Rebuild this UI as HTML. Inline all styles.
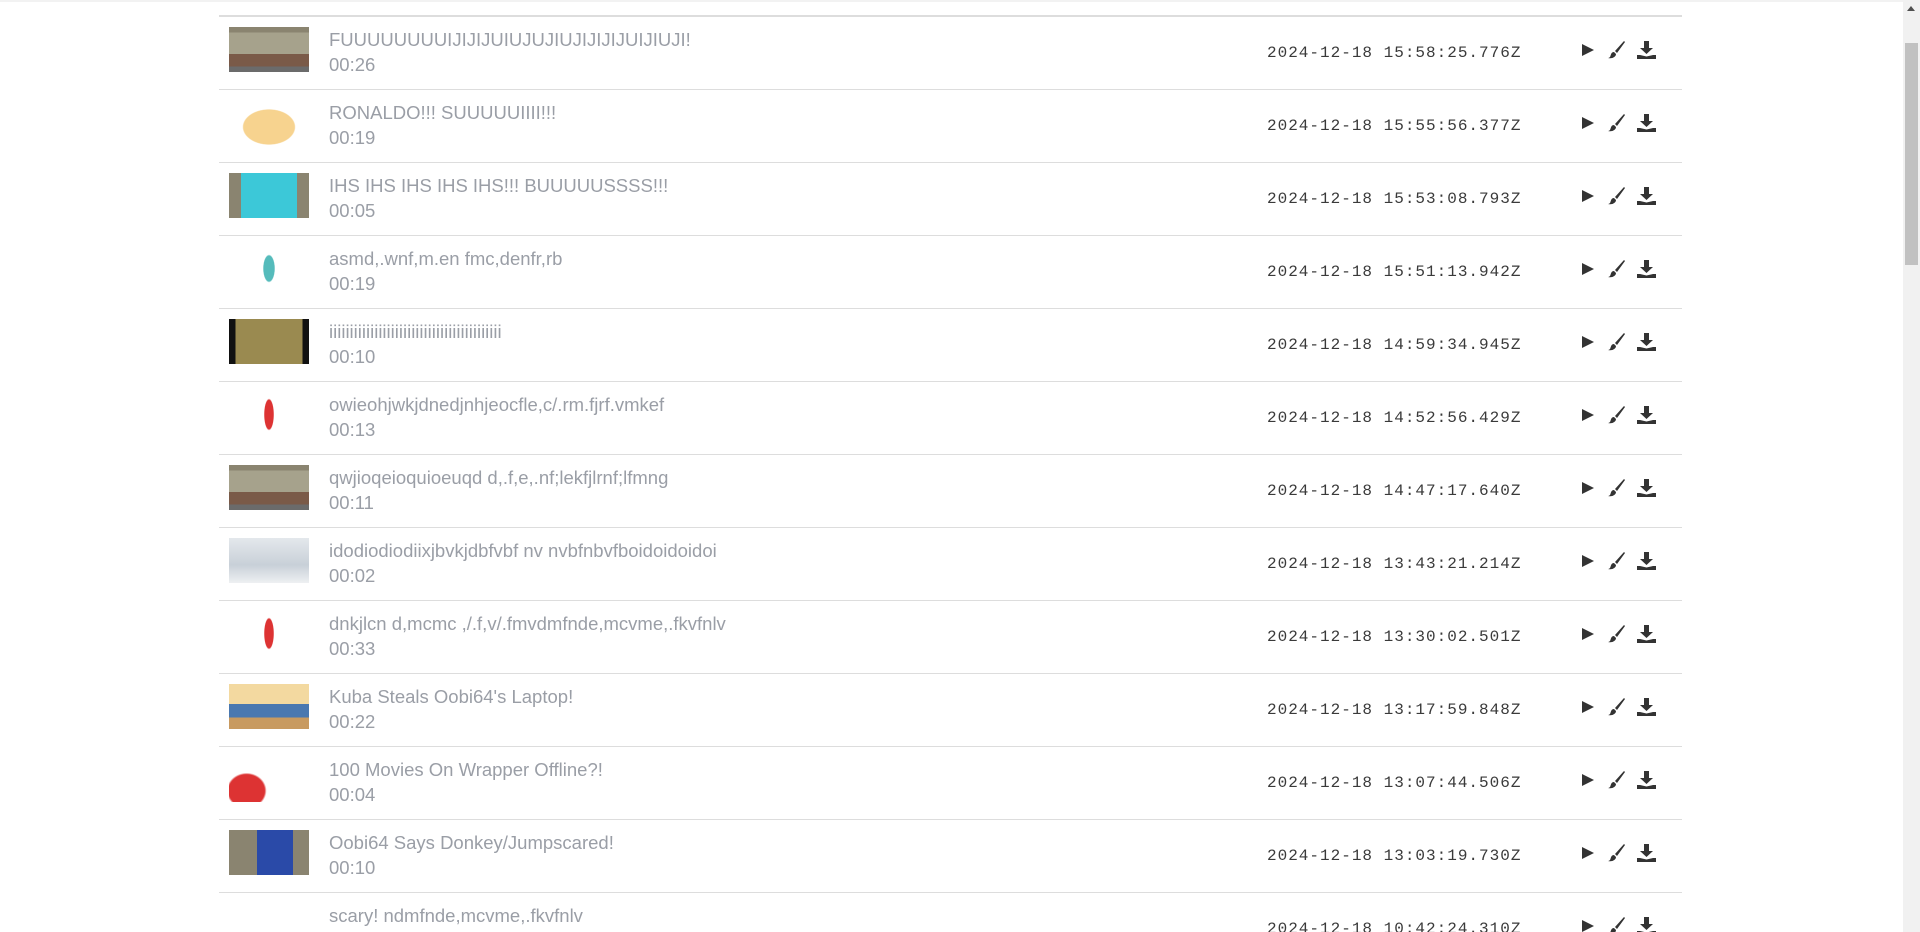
<!DOCTYPE html>
<html><head><meta charset="utf-8"><style>
html,body{margin:0;padding:0;background:#fff;overflow:hidden;width:1920px;height:932px}
body{position:relative;font-family:"Liberation Sans",sans-serif}
.topline{position:absolute;left:0;top:0;width:1903px;height:2px;background:#f2f2f2}
.tbl{position:absolute;left:219px;top:15px;width:1463px;border-top:2px solid #ddd}
.row{position:relative;height:72px;border-bottom:1px solid #ddd}
.th{position:absolute;left:10px;top:10px;width:80px;height:45px;overflow:hidden}
.t{position:absolute;left:110px;top:12px;font-size:18.5px;color:#9a9ea6;white-space:nowrap}
.d{position:absolute;left:110px;top:37px;font-size:18.5px;color:#9a9ea6}
.dt{position:absolute;left:1048px;top:27px;font-family:"Liberation Mono",monospace;font-size:16px;letter-spacing:1px;color:#3a3a3a}
.ic{position:absolute;top:24px}
.sb{position:absolute;right:0;top:0;width:17px;height:932px;background:#f1f1f1}
.thumb{position:absolute;left:2px;top:43px;width:13px;height:222px;background:#c1c1c1}
</style></head><body>
<div class="topline"></div>
<div class="tbl">
<div class="row"><div class="th" style="background:linear-gradient(#8a8470 0 12%,#a6a28c 12% 60%,#7a5a48 60% 88%,#6b6b6b 88%)"></div><div class="t">FUUUUUUUUIJIJIJUIUJUJIUJIJIJIJUIJIUJI!</div><div class="d">00:26</div><div class="dt">2024-12-18 15:58:25.776Z</div>ICONS</div>
<div class="row"><div class="th" style="background:radial-gradient(ellipse at 50% 60%,#f7d38f 0 45%,#fff 47%)"></div><div class="t">RONALDO!!! SUUUUUIIII!!!</div><div class="d">00:19</div><div class="dt">2024-12-18 15:55:56.377Z</div>ICONS</div>
<div class="row"><div class="th" style="background:linear-gradient(90deg,#8a8470 0 15%,#3cc8d8 15% 85%,#8a8470 85%)"></div><div class="t">IHS IHS IHS IHS IHS!!! BUUUUUSSSS!!!</div><div class="d">00:05</div><div class="dt">2024-12-18 15:53:08.793Z</div>ICONS</div>
<div class="row"><div class="th" style="background:radial-gradient(ellipse 6px 14px at 50% 50%,#5bb 0 90%,#fff 100%)"></div><div class="t">asmd,.wnf,m.en fmc,denfr,rb</div><div class="d">00:19</div><div class="dt">2024-12-18 15:51:13.942Z</div>ICONS</div>
<div class="row"><div class="th" style="background:linear-gradient(90deg,#111 0 8%,#9a8a50 8% 92%,#111 92%)"></div><div class="t">iiiiiiiiiiiiiiiiiiiiiiiiiiiiiiiiiiiiiiiiii</div><div class="d">00:10</div><div class="dt">2024-12-18 14:59:34.945Z</div>ICONS</div>
<div class="row"><div class="th" style="background:radial-gradient(ellipse 5px 16px at 50% 50%,#d33 0 90%,#fff 100%)"></div><div class="t">owieohjwkjdnedjnhjeocfle,c/.rm.fjrf.vmkef</div><div class="d">00:13</div><div class="dt">2024-12-18 14:52:56.429Z</div>ICONS</div>
<div class="row"><div class="th" style="background:linear-gradient(#8a8470 0 12%,#a6a28c 12% 60%,#7a5a48 60% 88%,#6b6b6b 88%)"></div><div class="t">qwjioqeioquioeuqd d,.f,e,.nf;lekfjlrnf;lfmng</div><div class="d">00:11</div><div class="dt">2024-12-18 14:47:17.640Z</div>ICONS</div>
<div class="row"><div class="th" style="background:linear-gradient(#e4e8ec,#c8d0d8 60%,#eef0f2)"></div><div class="t">idodiodiodiixjbvkjdbfvbf nv nvbfnbvfboidoidoidoi</div><div class="d">00:02</div><div class="dt">2024-12-18 13:43:21.214Z</div>ICONS</div>
<div class="row"><div class="th" style="background:radial-gradient(ellipse 5px 16px at 50% 50%,#d33 0 90%,#fff 100%)"></div><div class="t">dnkjlcn d,mcmc ,/.f,v/.fmvdmfnde,mcvme,.fkvfnlv</div><div class="d">00:33</div><div class="dt">2024-12-18 13:30:02.501Z</div>ICONS</div>
<div class="row"><div class="th" style="background:linear-gradient(#f3d9a0 0 45%,#4a78b0 45% 75%,#c89a60 75%)"></div><div class="t">Kuba Steals Oobi64's Laptop!</div><div class="d">00:22</div><div class="dt">2024-12-18 13:17:59.848Z</div>ICONS</div>
<div class="row"><div class="th" style="background:radial-gradient(ellipse 20px 18px at 22% 75%,#d33 0 90%,#fff 100%)"></div><div class="t">100 Movies On Wrapper Offline?!</div><div class="d">00:04</div><div class="dt">2024-12-18 13:07:44.506Z</div>ICONS</div>
<div class="row"><div class="th" style="background:linear-gradient(90deg,#8a8470 0 35%,#2a4aa8 35% 80%,#8a8470 80%)"></div><div class="t">Oobi64 Says Donkey/Jumpscared!</div><div class="d">00:10</div><div class="dt">2024-12-18 13:03:19.730Z</div>ICONS</div>
<div class="row"><div class="th"></div><div class="t">scary! ndmfnde,mcvme,.fkvfnlv</div><div class="d">00:10</div><div class="dt">2024-12-18 10:42:24.310Z</div>ICONS</div>
</div>
<div class="sb"><div style="position:absolute;left:4px;top:6px;width:0;height:0;border-left:4.5px solid transparent;border-right:4.5px solid transparent;border-bottom:5px solid #505050"></div><div class="thumb"></div></div>
<script>
var ic='<svg class="ic" style="left:1362px" width="14" height="18" viewBox="0 0 14 18"><path d="M1 3 L13 9 L1 15Z" fill="#333"/></svg>'+
'<svg class="ic" style="left:1389px" width="18" height="18" viewBox="0 0 18 18"><path d="M17 1 L16 0 L7 10 L9 12Z M6 11 C3 11 3 14 2 16 C1 17 0 17 0 17 C4 18 8 16 8 13Z" fill="#333"/></svg>'+
'<svg class="ic" style="left:1418px" width="19" height="18" viewBox="0 0 19 18"><path d="M7 0 H12 V7 H16 L9.5 13 L3 7 H7Z M0 14 H3 L9.5 15.5 L16 14 H19 V18 H0Z" fill="#333"/></svg>';
document.querySelectorAll('.row').forEach(function(r){r.innerHTML=r.innerHTML.replace('ICONS',ic);});
</script>
</body></html>
